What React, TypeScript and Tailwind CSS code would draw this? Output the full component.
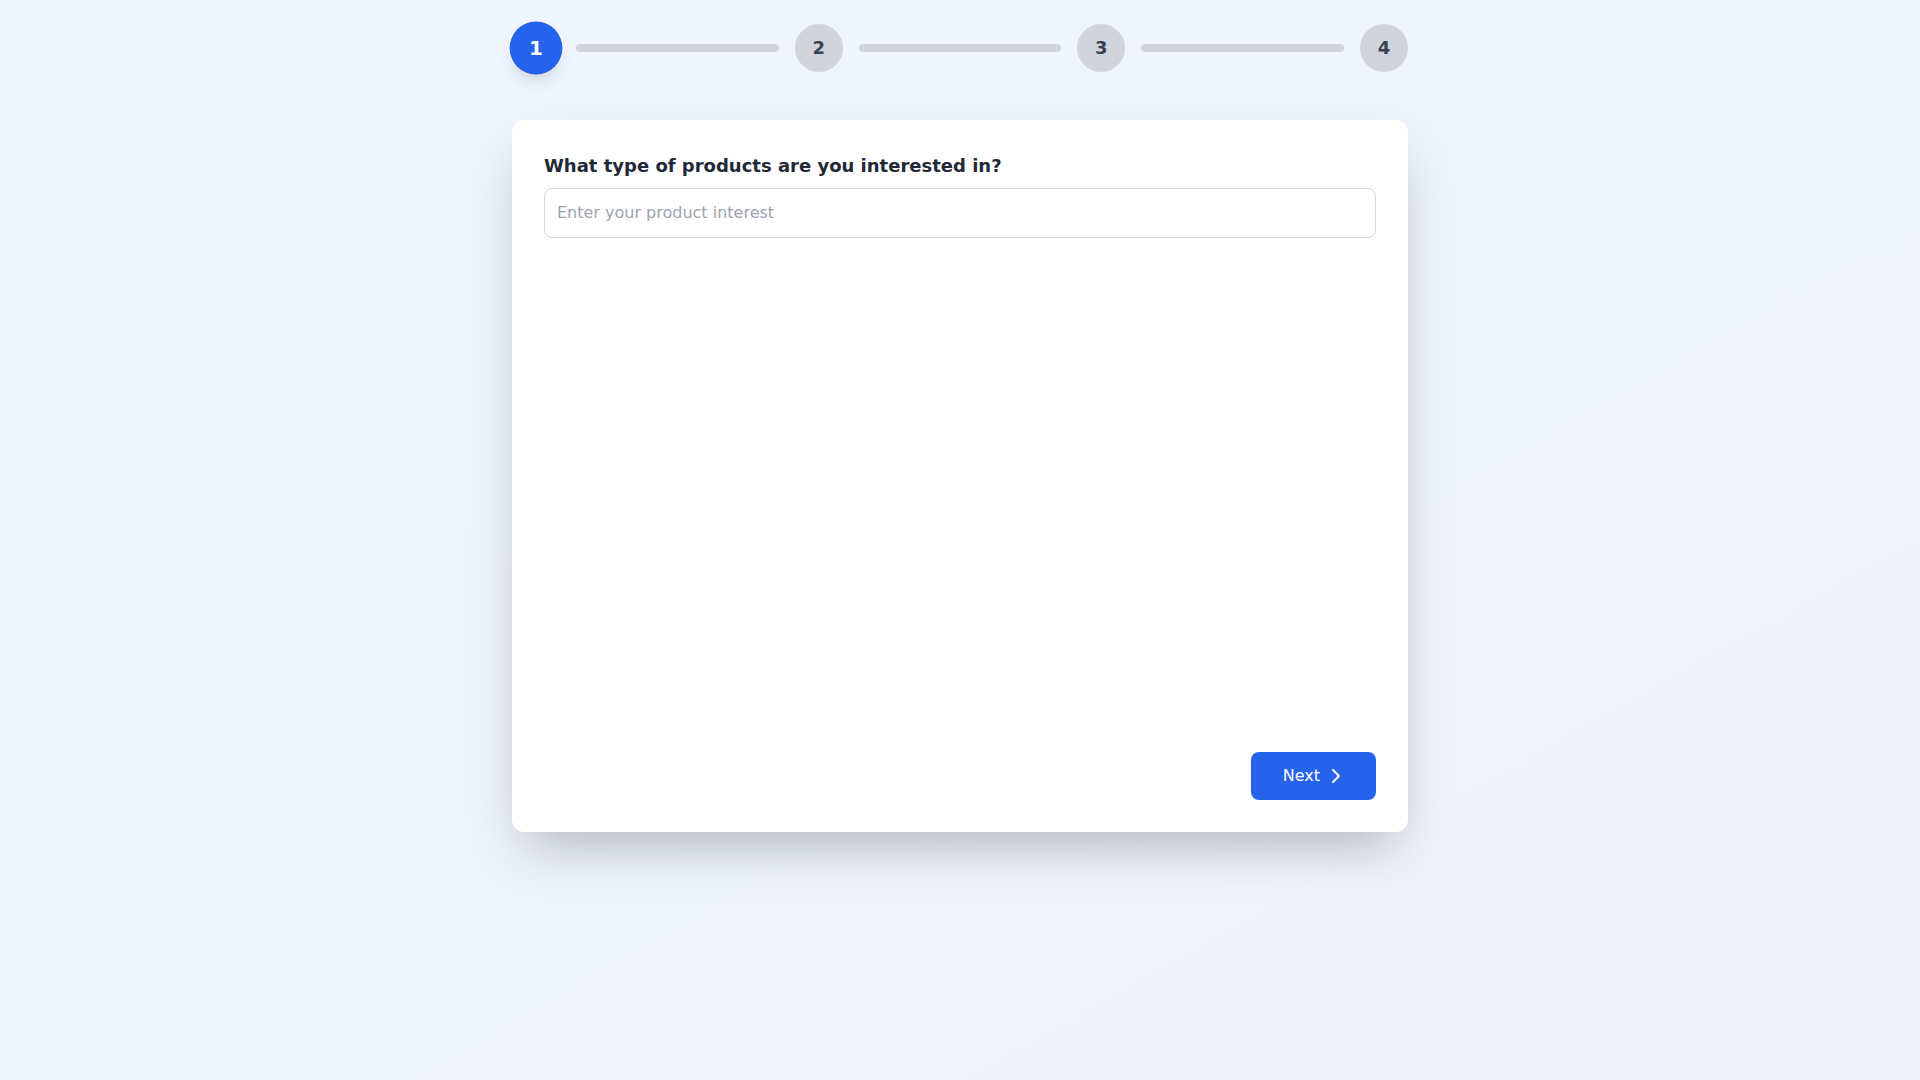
import { ChevronRight } from "lucide-react";

const steps = [1, 2, 3, 4];

export default function App() {
  const current = 1;

  return (
    <div
      className="min-h-screen bg-gradient-to-br from-[#eff6ff] to-[#eef2ff] px-4 py-6"
      style={{ fontFamily: '"DejaVu Sans", "Noto Sans", sans-serif' }}
    >
      <div className="mx-auto max-w-4xl">
        {/* stepper */}
        <div className="mb-12 flex items-center">
          {steps.map((s, i) => (
            <div key={s} className={"flex items-center " + (i < steps.length - 1 ? "flex-1" : "")}>
              <div
                className={
                  "flex h-12 w-12 shrink-0 items-center justify-center rounded-full text-lg font-bold " +
                  (s === current
                    ? "scale-110 bg-[#2563eb] text-white shadow-lg"
                    : "bg-[#d1d5db] text-[#374151]")
                }
              >
                {s}
              </div>
              {i < steps.length - 1 && <div className="mx-4 h-2 flex-1 rounded-full bg-[#d1d5db]" />}
            </div>
          ))}
        </div>

        {/* card */}
        <div className="flex h-[712px] flex-col rounded-xl bg-white p-8 shadow-2xl">
          <label className="mb-2 block text-lg font-semibold text-[#1f2937]">
            What type of products are you interested in?
          </label>
          <input
            type="text"
            placeholder="Enter your product interest"
            className="w-full rounded-lg border border-[#d1d5db] p-3 text-base text-[#1f2937] placeholder:text-[#9ca3af] focus:outline-none"
          />

          <div className="mt-auto flex justify-end">
            <button className="flex items-center rounded-lg bg-[#2563eb] py-3 pl-8 pr-7 text-base text-white">
              Next
              <ChevronRight className="ml-1 h-6 w-6" strokeWidth={2} />
            </button>
          </div>
        </div>
      </div>
    </div>
  );
}
